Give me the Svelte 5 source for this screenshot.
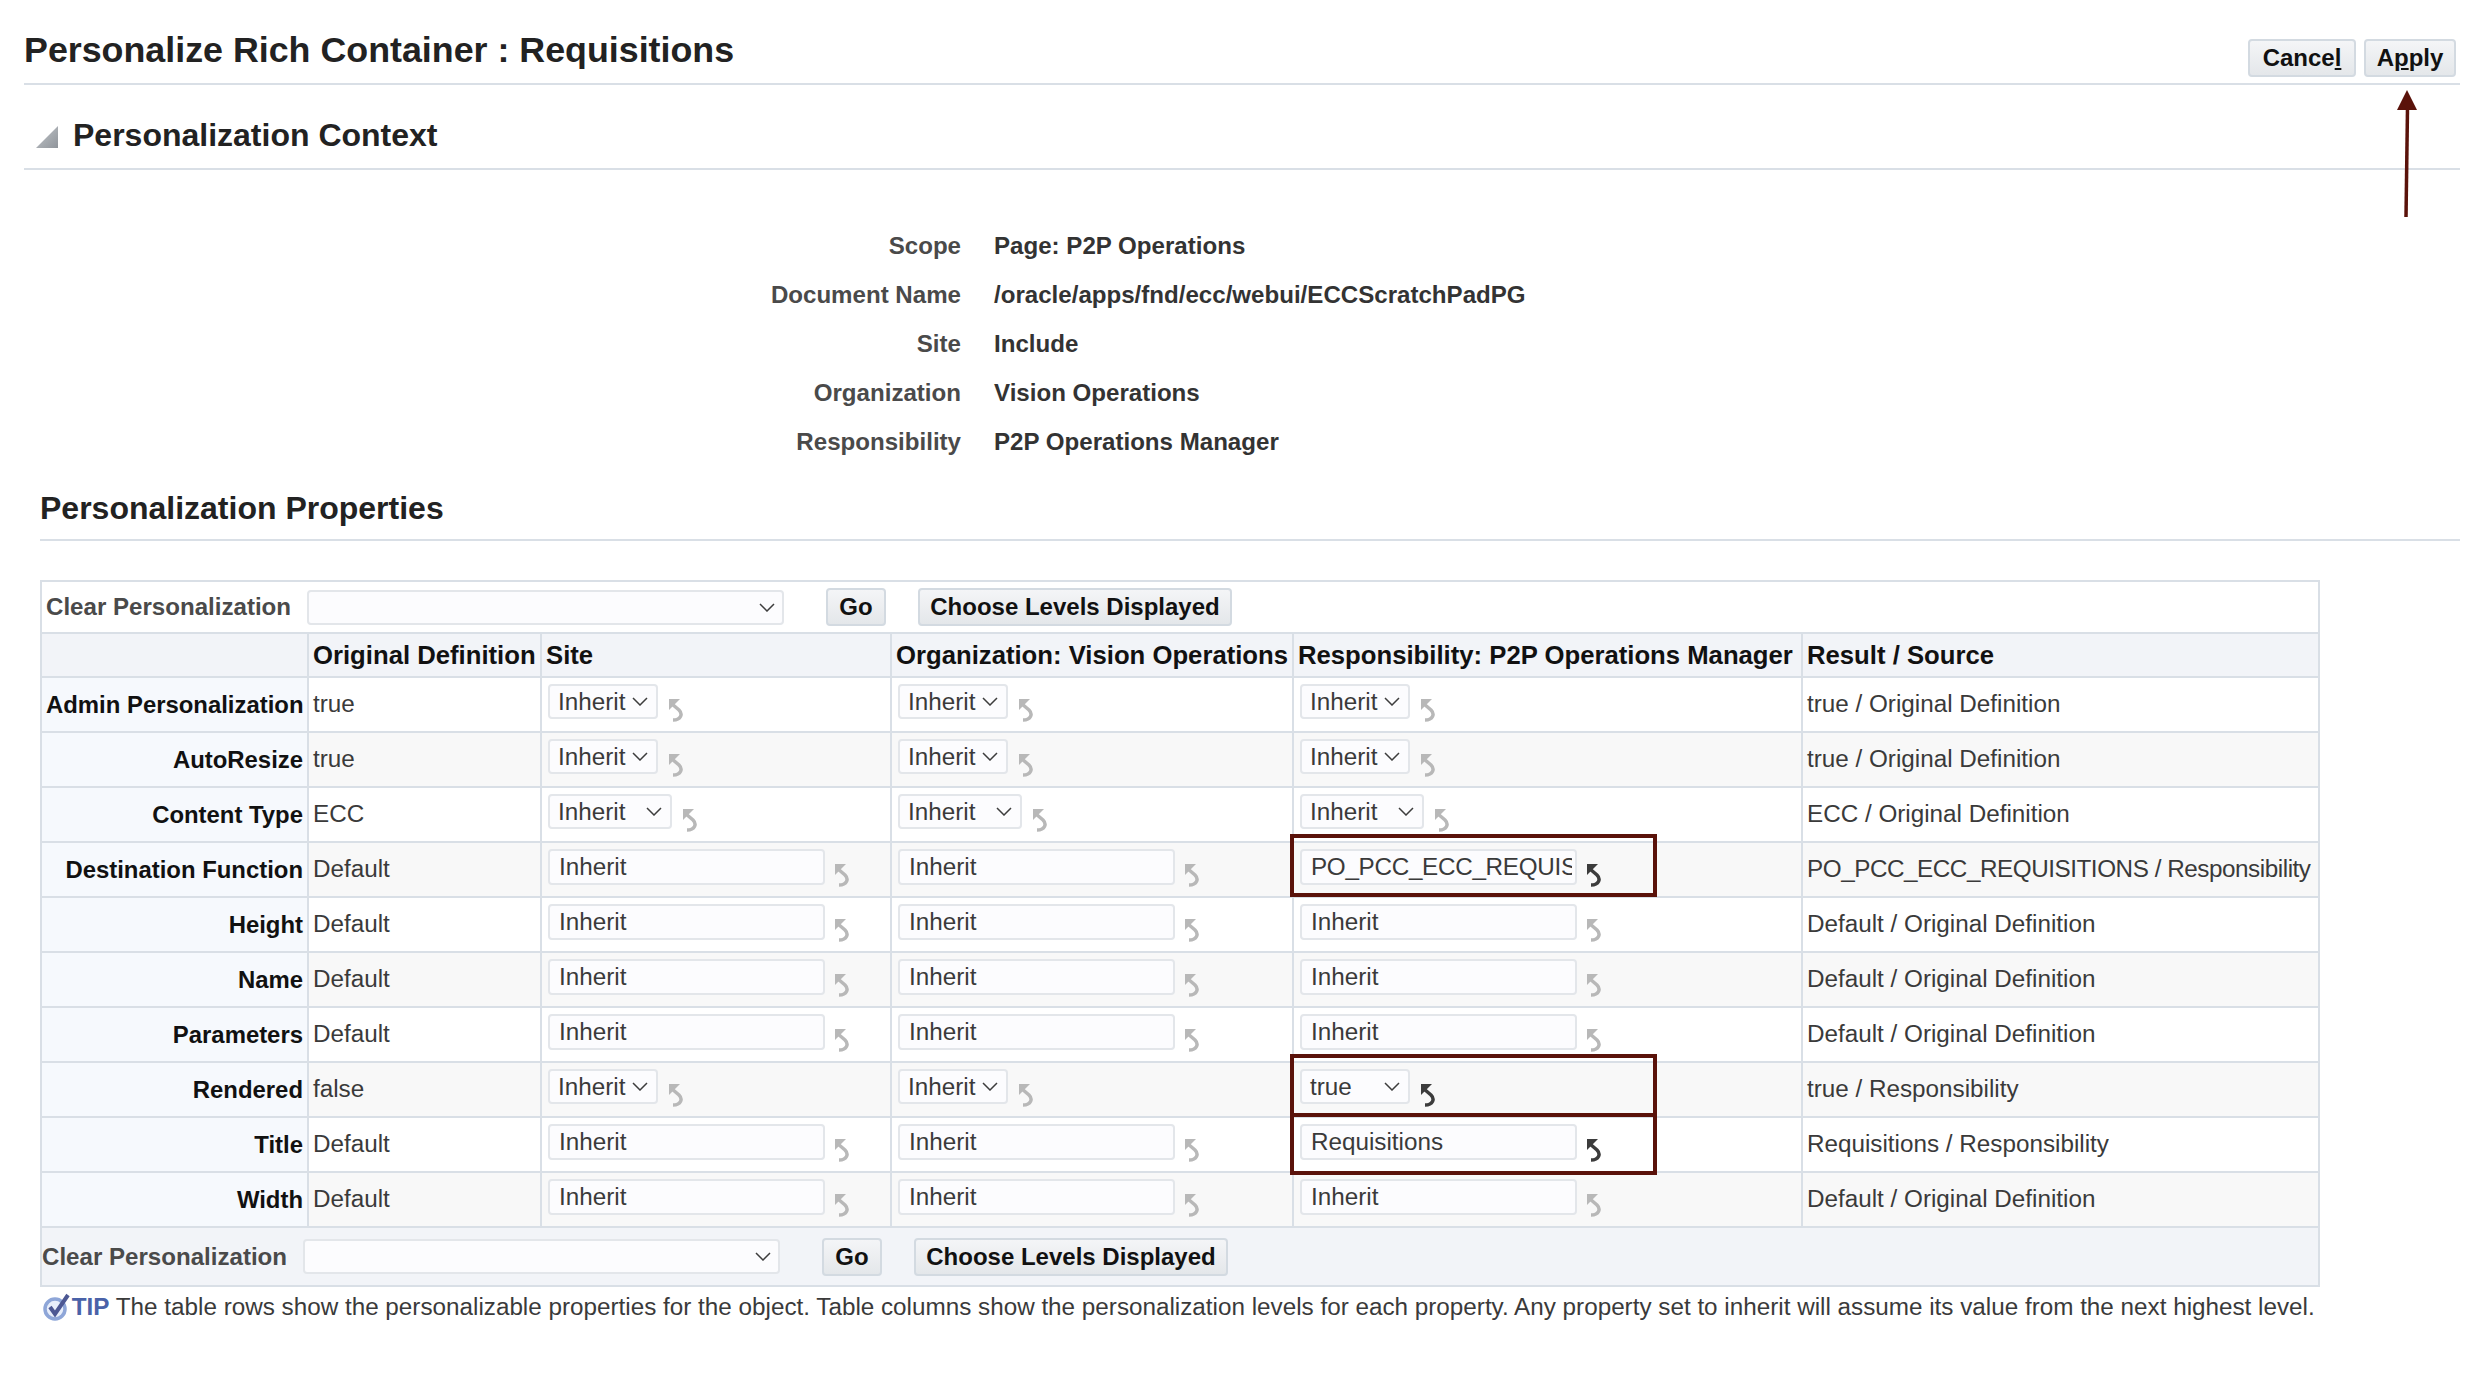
<script lang="ts">
  type Cell = { kind: "sel" | "txt"; value: string; wide?: boolean; on?: boolean };

  const inh = (wide = false): Cell => ({ kind: "sel", value: "Inherit", wide });
  const txt = (value = "Inherit", on = false): Cell => ({ kind: "txt", value, on });

  const context = [
    ["Scope", "Page: P2P Operations"],
    ["Document Name", "/oracle/apps/fnd/ecc/webui/ECCScratchPadPG"],
    ["Site", "Include"],
    ["Organization", "Vision Operations"],
    ["Responsibility", "P2P Operations Manager"],
  ];

  const rows: { name: string; orig: string; cells: Cell[]; result: string }[] = [
    { name: "Admin Personalization", orig: "true", cells: [inh(), inh(), inh()], result: "true / Original Definition" },
    { name: "AutoResize", orig: "true", cells: [inh(), inh(), inh()], result: "true / Original Definition" },
    { name: "Content Type", orig: "ECC", cells: [inh(true), inh(true), inh(true)], result: "ECC / Original Definition" },
    { name: "Destination Function", orig: "Default", cells: [txt(), txt(), txt("PO_PCC_ECC_REQUISITIONS", true)], result: "PO_PCC_ECC_REQUISITIONS / Responsibility" },
    { name: "Height", orig: "Default", cells: [txt(), txt(), txt()], result: "Default / Original Definition" },
    { name: "Name", orig: "Default", cells: [txt(), txt(), txt()], result: "Default / Original Definition" },
    { name: "Parameters", orig: "Default", cells: [txt(), txt(), txt()], result: "Default / Original Definition" },
    { name: "Rendered", orig: "false", cells: [inh(), inh(), { kind: "sel", value: "true", on: true }], result: "true / Responsibility" },
    { name: "Title", orig: "Default", cells: [txt(), txt(), txt("Requisitions", true)], result: "Requisitions / Responsibility" },
    { name: "Width", orig: "Default", cells: [txt(), txt(), txt()], result: "Default / Original Definition" },
  ];
</script>

{#snippet chevron()}
  <svg class="chev" viewBox="0 0 16 9" width="16" height="9" aria-hidden="true">
    <path d="M1 1l7 7 7-7" fill="none" stroke="#3d3d3d" stroke-width="1.5" />
  </svg>
{/snippet}

{#snippet toolbar()}
  <div class="tools">
    <span class="tool-label">Clear Personalization</span>
    <span class="sel sel-clear">{@render chevron()}</span>
    <button class="btn go">Go</button>
    <button class="btn choose">Choose Levels Displayed</button>
  </div>
{/snippet}

<div class="page">
  <header class="title-bar">
    <h1>Personalize Rich Container : Requisitions</h1>
    <div class="actions">
      <button class="btn cancel">Cance<u>l</u></button>
      <button class="btn apply">A<u>p</u>ply</button>
    </div>
  </header>

  <div class="context-head">
    <svg viewBox="0 0 22 22" width="22" height="22" aria-hidden="true">
      <defs>
        <linearGradient id="tri" x1="0" y1="0" x2="1" y2="1">
          <stop offset="0" stop-color="#c3c7cb" />
          <stop offset="1" stop-color="#8f949a" />
        </linearGradient>
      </defs>
      <path d="M22 0v22H0z" fill="url(#tri)" />
    </svg>
    <h2>Personalization Context</h2>
  </div>

  <dl class="context">
    {#each context as [k, v]}
      <dt>{k}</dt>
      <dd>{v}</dd>
    {/each}
  </dl>

  <section class="props">
    <h2 class="props-head">Personalization Properties</h2>

    <table>
      <colgroup>
        <col style="width:267px" />
        <col style="width:233px" />
        <col style="width:350px" />
        <col style="width:402px" />
        <col style="width:509px" />
        <col style="width:517px" />
      </colgroup>
      <thead>
        <tr class="tool-row"><td colspan="6">{@render toolbar()}</td></tr>
        <tr class="head-row">
          <th></th>
          <th>Original Definition</th>
          <th>Site</th>
          <th>Organization: Vision Operations</th>
          <th>Responsibility: P2P Operations Manager</th>
          <th>Result / Source</th>
        </tr>
      </thead>
      <tbody>
        {#each rows as row}
          <tr>
            <th class="name" scope="row">{row.name}</th>
            <td class="val">{row.orig}</td>
            {#each row.cells as cell}
              <td class="ctl">
                <div class="ctl-wrap">
                  {#if cell.kind === "sel"}
                    <span class="sel" class:wide={cell.wide}>{cell.value}{@render chevron()}</span>
                  {:else}
                    <input class="field" class:tight={cell.value.length > 20} value={cell.value} readonly />
                  {/if}
                  <svg class="undo" class:on={cell.on} viewBox="0 0 16 24" width="16" height="24" aria-hidden="true">
                    <path d="M1 0h11L1 11z" />
                    <path class="undo-line" d="M4 5l7 6c4 4 2 10-6 10" />
                  </svg>
                </div>
              </td>
            {/each}
            <td class="val" class:tight={row.result.length > 35}>{row.result}</td>
          </tr>
        {/each}
      </tbody>
      <tfoot>
        <tr class="foot-row"><td colspan="6">{@render toolbar()}</td></tr>
      </tfoot>
    </table>

    <p class="tip">
      <svg viewBox="0 0 28 28" width="28" height="28" aria-hidden="true">
        <circle cx="12" cy="16" r="10" fill="#e8eefa" stroke="#8ea6d8" stroke-width="3.5" />
        <path d="M7 14l5 7L25 2" fill="none" stroke="#4d5893" stroke-width="4" />
      </svg>
      <b>TIP</b> The table rows show the personalizable properties for the object. Table columns show the personalization levels for each property. Any property set to inherit will assume its value from the next highest level.
    </p>
  </section>

  <!-- red annotations drawn on top of the screenshot -->
  <span class="mark m1"></span>
  <span class="mark m2"></span>
  <span class="mark m3"></span>
  <svg class="arrow" viewBox="0 0 22 128" width="22" height="128" aria-hidden="true">
    <path d="M11 0l10 20H1z" fill="#5a120a" />
    <path d="M11.5 18L10 127" stroke="#5a120a" stroke-width="3.5" fill="none" />
  </svg>
</div>

<style>
  :global(body) {
    margin: 0;
    background: #fff;
  }
  .page {
    position: relative;
    width: 2478px;
    height: 1380px;
    box-sizing: border-box;
    padding: 0 18px 0 24px;
    font-family: "Liberation Sans", Arial, sans-serif;
    font-size: 24.26px;
    color: #333;
    overflow: hidden;
  }
  h1,
  h2,
  p,
  dl,
  dd {
    margin: 0;
  }
  .title-bar {
    display: flex;
    justify-content: space-between;
    align-items: flex-end;
    height: 85px;
    box-sizing: border-box;
    border-bottom: 2px solid #d9dfe6;
    padding-bottom: 6px;
  }
  h1 {
    font-size: 35.8px;
    color: #222;
    align-self: flex-start;
    padding-top: 29px;
    line-height: 42px;
  }
  .actions {
    display: flex;
    gap: 8px;
    margin-right: 4px;
  }
  .btn {
    height: 38px;
    padding: 0;
    border: 2px solid #d3dae1;
    border-radius: 4px;
    background: linear-gradient(#f4f5f7, #e4e7ea);
    font: bold 24px "Liberation Sans", Arial, sans-serif;
    color: #111;
  }
  .cancel {
    width: 108px;
  }
  .apply {
    width: 92px;
  }
  .context-head {
    display: flex;
    align-items: center;
    height: 85px;
    box-sizing: border-box;
    border-bottom: 2px solid #d9dfe6;
    padding: 18px 0 0 12px;
    gap: 15px;
  }
  .context-head svg {
    margin-top: 2px;
  }
  .context-head h2 {
    font-size: 32px;
    color: #222;
  }
  .context {
    display: grid;
    grid-template-columns: 937px auto;
    column-gap: 33px;
    grid-auto-rows: 49px;
    align-items: center;
    margin: 51px 0 -1px;
    font-weight: bold;
    font-size: 24.1px;
  }
  .context dt {
    text-align: right;
    color: #4a4a4a;
  }
  .context dd {
    color: #333;
  }
  .props {
    margin-left: 16px;
  }
  .props-head {
    font-size: 32px;
    color: #222;
    height: 76px;
    line-height: 46px;
    padding-top: 20px;
    border-bottom: 2px solid #d9dfe6;
    box-sizing: border-box;
  }
  table {
    border-collapse: collapse;
    table-layout: fixed;
    width: 2278px;
    margin-top: 39px;
    border: 2px solid #d9dfe6;
  }
  td,
  th {
    border: 2px solid #d9dfe6;
    padding: 0 4px;
    text-align: left;
    white-space: nowrap;
  }
  .tool-row td {
    height: 50px;
    padding: 0;
    background: #fff;
  }
  .foot-row td {
    height: 57px;
    padding: 0;
    background: #f2f4f8;
  }
  .tools {
    display: flex;
    align-items: center;
    padding-left: 4px;
  }
  .foot-row .tools {
    padding-left: 0;
  }
  .tool-label {
    flex: 0 0 261px;
    font-size: 24.1px;
    font-weight: bold;
    color: #4a4a4a;
  }
  .sel.sel-clear {
    width: 477px;
    justify-content: flex-end;
    padding-right: 7px;
  }
  .go {
    margin-left: 42px;
    width: 60px;
  }
  .choose {
    margin-left: 32px;
    width: 314px;
  }
  .head-row th {
    height: 42px;
    font-size: 25.7px;
    background: #f2f4f8;
    color: #111;
  }
  tbody tr {
    height: 55px;
    background: #fff;
  }
  tbody tr:nth-child(even) {
    background: #f8f8f8;
  }
  tbody th.name {
    text-align: right;
    padding-right: 4px;
    font-size: 23.9px;
    background: #f6f9fd;
    color: #111;
  }
  .val {
    padding-bottom: 2px;
    color: #3a3a3a;
  }
  .val.tight {
    letter-spacing: -0.45px;
  }
  td.ctl {
    padding: 6px 5px 0 6px;
    vertical-align: top;
  }
  .ctl-wrap {
    display: flex;
    align-items: flex-start;
  }
  .sel {
    display: inline-flex;
    align-items: center;
    justify-content: space-between;
    box-sizing: border-box;
    width: 110px;
    height: 35px;
    padding: 0 8px;
    background: #fcfcfe;
    border: 2px solid #e3e6ea;
    border-radius: 4px;
    color: #3a3a3a;
  }
  .sel.wide {
    width: 124px;
  }
  .field {
    box-sizing: border-box;
    width: 277px;
    height: 36px;
    padding: 0 3px 0 9px;
    background: #fcfcfe;
    border: 2px solid #e3e6ea;
    border-radius: 4px;
    color: #3a3a3a;
    font: 24.26px "Liberation Sans", Arial, sans-serif;
    outline: none;
  }
  .field.tight {
    letter-spacing: -0.3px;
  }
  .undo {
    margin: 15px 0 0 10px;
    fill: #b8b8b8;
    flex: none;
  }
  .undo-line {
    fill: none;
    stroke: #b8b8b8;
    stroke-width: 3.5;
  }
  .undo.on {
    fill: #3c3c3c;
  }
  .undo.on .undo-line {
    stroke: #3c3c3c;
  }
  .field + .undo {
    margin-left: 9px;
  }
  .tip {
    margin-top: 3px;
    line-height: 34px;
    white-space: nowrap;
    color: #3a3a3a;
  }
  .tip svg {
    vertical-align: -6px;
    margin-left: 3px;
  }
  .tip b {
    margin-left: -6px;
    color: #4a62a8;
  }
  .mark {
    position: absolute;
    border: 4px solid #5a120a;
    box-sizing: border-box;
    left: 1290px;
    width: 367px;
  }
  .m1 {
    top: 834px;
    height: 63px;
  }
  .m2 {
    top: 1054px;
    height: 63px;
  }
  .m3 {
    top: 1113px;
    height: 62px;
  }
  .arrow {
    position: absolute;
    left: 2396px;
    top: 90px;
  }
</style>
